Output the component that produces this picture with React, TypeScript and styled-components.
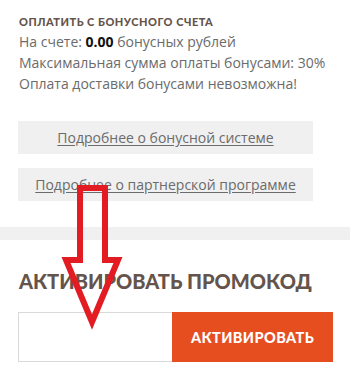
import React from "react";
import styled, { createGlobalStyle } from "styled-components";

const Global = createGlobalStyle`
  html, body { margin: 0; padding: 0; background: #fff; }
  body { width: 350px; height: 380px; overflow: hidden; }
  * { box-sizing: border-box; }
`;

const Page = styled.div`
  position: relative;
  width: 350px;
  height: 380px;
  background: #fff;
  font-family: "Open Sans", "Liberation Sans", sans-serif;
`;

const BonusSection = styled.section`
  padding: 14px 18px 26px 18px;
  display: flex;
  flex-direction: column;
`;

const SmallTitle = styled.h3`
  margin: 0 0 1px 1px;
  font-family: Lato, "DejaVu Sans", sans-serif;
  font-weight: 900;
  font-size: 11px;
  line-height: 16px;
  letter-spacing: 0.5px;
  white-space: nowrap;
  color: #65544b;
  text-transform: uppercase;
`;

const InfoLine = styled.p`
  margin: 0 0 0 1px;
  font-size: 14px;
  line-height: 21px;
  color: #6b6b6b;
  b { color: #111; font-weight: 700; }
`;

const LinkList = styled.div`
  display: flex;
  flex-direction: column;
  gap: 14px;
  margin-top: 27px;
`;

const LinkButton = styled.a`
  display: flex;
  align-items: center;
  justify-content: center;
  width: 295px;
  height: 33px;
  background: #f0f0f0;
  color: #6b6b6b;
  font-size: 14px;
  text-decoration: underline;
  text-underline-offset: 2px;
  cursor: pointer;
`;

const Divider = styled.div`
  height: 13px;
  background: #f0f0f0;
`;

const PromoSection = styled.section`
  padding: 28px 18px 0 18px;
`;

const BigTitle = styled.h2`
  margin: 0 0 18px 1px;
  font-family: Lato, "DejaVu Sans", sans-serif;
  font-weight: 900;
  font-size: 20px;
  line-height: 26px;
  letter-spacing: 0;
  white-space: nowrap;
  color: #65544b;
  text-transform: uppercase;
`;

const PromoForm = styled.div`
  display: flex;
  height: 50px;
  width: 315px;
`;

const PromoInput = styled.input`
  width: 154px;
  height: 50px;
  border: 1px solid #d9d9d9;
  border-right: none;
  outline: none;
  padding: 0 10px;
  font-size: 14px;
  background: #fff;
`;

const ActivateButton = styled.button`
  flex: 1;
  height: 50px;
  border: none;
  background: #e64e20;
  color: #fff;
  font-family: Lato, "DejaVu Sans", sans-serif;
  font-weight: 900;
  font-size: 14.5px;
  letter-spacing: 0.4px;
  text-transform: uppercase;
  cursor: pointer;
`;

const ArrowOverlay = styled.svg`
  position: absolute;
  left: 0;
  top: 0;
  pointer-events: none;
`;

export default function App() {
  return (
    <Page>
      <Global />
      <BonusSection>
        <SmallTitle>Оплатить с бонусного счета</SmallTitle>
        <InfoLine>
          На счете: <b>0.00</b> бонусных рублей
        </InfoLine>
        <InfoLine>Максимальная сумма оплаты бонусами: 30%</InfoLine>
        <InfoLine>Оплата доставки бонусами невозможна!</InfoLine>
        <LinkList>
          <LinkButton>Подробнее о бонусной системе</LinkButton>
          <LinkButton>Подробнее о партнерской программе</LinkButton>
        </LinkList>
      </BonusSection>
      <Divider />
      <PromoSection>
        <BigTitle>Активировать промокод</BigTitle>
        <PromoForm>
          <PromoInput type="text" />
          <ActivateButton>Активировать</ActivateButton>
        </PromoForm>
      </PromoSection>
      <ArrowOverlay width="350" height="380" viewBox="0 0 350 380">
        <polygon
          points="80,188 105,188 105,260 118,260 92,322 66,260 80,260"
          fill="none"
          stroke="#e31c23"
          strokeWidth="6"
          strokeLinejoin="miter"
        />
      </ArrowOverlay>
    </Page>
  );
}
